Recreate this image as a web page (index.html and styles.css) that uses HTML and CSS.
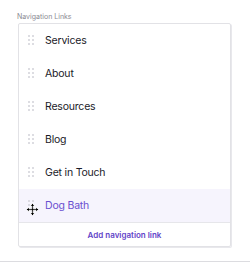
FILE: index.html
```html
<!DOCTYPE html>
<html>
<head>
<meta charset="utf-8">
<link rel="stylesheet" href="styles.css">
</head>
<body>
<div class="panel">
  <div class="label">Navigation Links</div>
  <div class="box">
    <div class="row"><span class="grip"><i></i><i></i><i></i><i></i><i></i><i></i></span><span class="txt">Services</span></div>
    <div class="row"><span class="grip"><i></i><i></i><i></i><i></i><i></i><i></i></span><span class="txt">About</span></div>
    <div class="row"><span class="grip"><i></i><i></i><i></i><i></i><i></i><i></i></span><span class="txt">Resources</span></div>
    <div class="row"><span class="grip"><i></i><i></i><i></i><i></i><i></i><i></i></span><span class="txt">Blog</span></div>
    <div class="row"><span class="grip"><i></i><i></i><i></i><i></i><i></i><i></i></span><span class="txt">Get in Touch</span></div>
    <div class="row active"><span class="grip"><i></i><i></i><i></i><i></i><i></i><i></i></span><span class="txt">Dog Bath</span>
      <svg class="cursor" width="13" height="13" viewBox="0 0 13 13"><path d="M6.5 0.5 L9 3 H7.3 V5.7 H10 V4 L12.5 6.5 L10 9 V7.3 H7.3 V10 H9 L6.5 12.5 L4 10 H5.7 V7.3 H3 V9 L0.5 6.5 L3 4 V5.7 H5.7 V3 H4 Z" fill="#000" stroke="#fff" stroke-width="0.8"/></svg>
    </div>
    <div class="add">Add navigation link</div>
  </div>
</div>
<div class="rule"></div>
</body>
</html>
```
FILE: styles.css
```css
html, body { margin: 0; padding: 0; background: #fff; }
body { font-family: Inter, "Noto Sans", sans-serif; width: 250px; height: 263px; overflow: hidden; }
.panel { padding: 11px 17px 0 18px; }
.label { font-size: 7px; color: #8a8a92; line-height: 11px; margin-bottom: 1px; margin-left: -1px; }
.box {
  border: 1px solid #e2e2e6;
  border-radius: 2px;
  box-shadow: 1px 1px 0 #e8e8ec;
  width: 213px;
  box-sizing: border-box;
}
.row {
  position: relative;
  height: 33px;
  display: flex;
  align-items: center;
  padding-left: 9px;
  padding-bottom: 1px;
  box-sizing: border-box;
}
.row.active { background: #f6f4fd; border-bottom: 1px solid #e6e6ea; height: 34px; }
.grip {
  display: grid;
  grid-template-columns: 2px 2px;
  column-gap: 2px;
  row-gap: 2px;
  width: 6px;
  margin-right: 11px;
}
.grip i { width: 2px; height: 2px; background: #d2d2d8; border-radius: 1px; display: block; }
.txt { font-size: 10.5px; letter-spacing: -0.2px; color: #1a1a28; }
.active .txt { color: #6a4fd0; }
.cursor { position: absolute; left: 7px; top: 14px; }
.add {
  height: 23px;
  display: flex;
  align-items: center;
  justify-content: center;
  font-size: 8px;
  font-weight: 600;
  color: #5f44c8;
}
.rule { margin-top: 14px; height: 1px; background: #dcdce0; }
```
